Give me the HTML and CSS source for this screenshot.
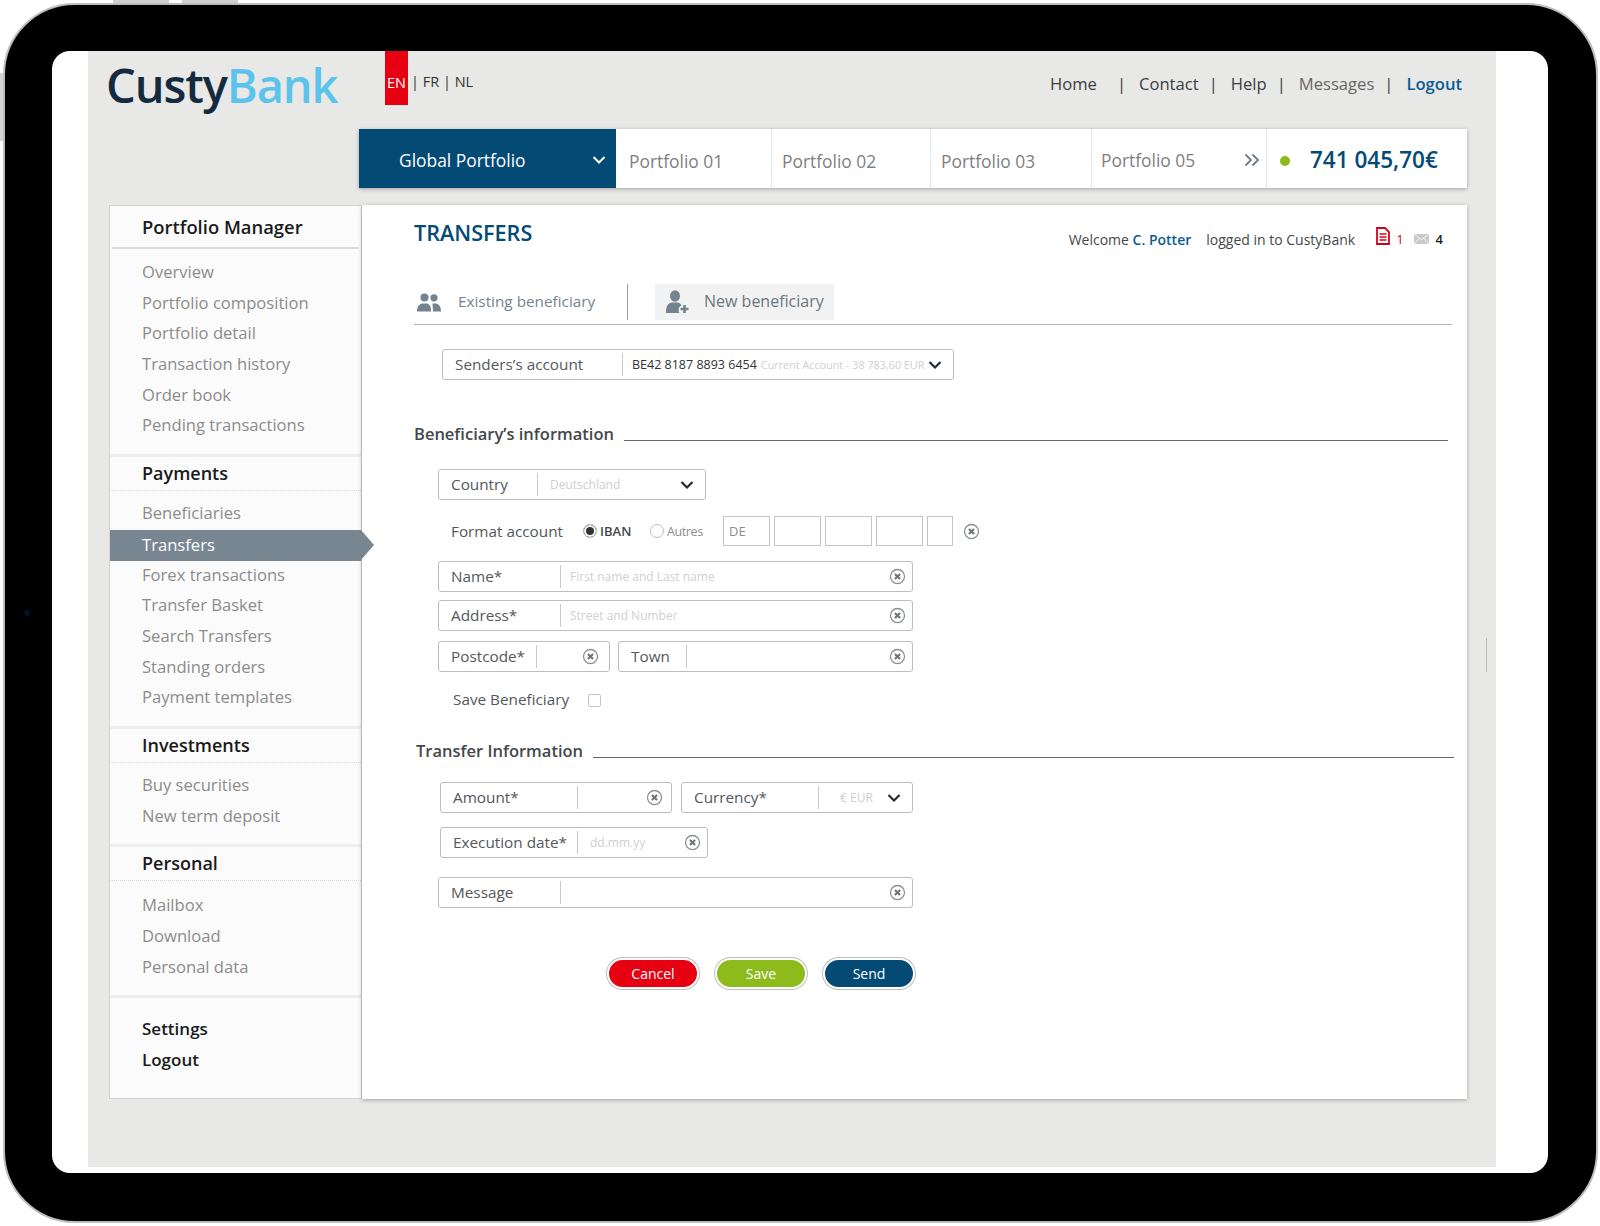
FILE: index.html
```html
<!DOCTYPE html>
<html>
  <head>
    <meta charset="UTF-8">
    <title>CustyBank - Transfers</title>
    <link rel="stylesheet" href="styles.css">
  </head>

  <body>
    <svg class="icon-defs" width="0" height="0">
      <symbol id="clear" viewBox="0 0 16 16">
        <circle cx="8" cy="8" r="6.600" fill="none" stroke="#8a8f93" stroke-width="1.200"/>
        <path d="M5.600 5.600l4.800 4.800M10.400 5.600l-4.800 4.800" fill="none" stroke="#6f7478" stroke-width="2"/>
      </symbol>
      <symbol id="chevron" viewBox="0 0 14 10">
        <path d="M1.500 2l5.500 5.500L12.500 2" fill="none" stroke="#222c33" stroke-width="2.200"/>
      </symbol>
    </svg>

    <div class="tablet">
      <span class="hw-btn hw-btn-one"></span>
      <span class="hw-btn hw-btn-two"></span>
      <span class="hw-side"></span>
      <span class="camera"></span>

      <div class="screen">
        <div class="page">
          <span class="home-line"></span>

          <header class="header">
            <div class="logo"><span class="logo-dark">Custy</span><span class="logo-light">Bank</span></div>
            <div class="lang"><span class="lang-active">EN</span><span class="lang-rest">| FR | NL</span></div>
            <nav class="top-nav">
              <a class="nav-home">Home</a><i>|</i>
              <a>Contact</a><i>|</i>
              <a>Help</a><i>|</i>
              <a class="nav-muted">Messages</a><i>|</i>
              <a class="nav-logout">Logout</a>
            </nav>
          </header>

          <div class="portfolio-bar">
            <div class="tab-global">
              <span>Global Portfolio</span>
              <svg class="tab-chevron" viewBox="0 0 14 10"><path d="M1.500 2l5.500 5.500L12.500 2" fill="none" stroke="#fff" stroke-width="2"/></svg>
            </div>
            <div class="tab tab-one">Portfolio 01</div>
            <div class="tab tab-two">Portfolio 02</div>
            <div class="tab tab-three">Portfolio 03</div>
            <div class="tab tab-five">
              <span>Portfolio 05</span>
              <svg class="tab-more" viewBox="0 0 16 14"><path d="M1.500 1.500L7 7l-5.500 5.500M8.500 1.500L14 7l-5.500 5.500" fill="none" stroke="#6d7c88" stroke-width="1.800"/></svg>
            </div>
            <div class="balance"><span class="balance-dot"></span><span class="balance-value">741 045,70€</span></div>
          </div>

          <div class="content">
            <aside class="sidebar">
              <section class="side-group">
                <h3 class="side-title side-title-first">Portfolio Manager</h3>
                <ul class="side-list side-list-first">
                  <li>Overview</li>
                  <li>Portfolio composition</li>
                  <li>Portfolio detail</li>
                  <li>Transaction history</li>
                  <li>Order book</li>
                  <li>Pending transactions</li>
                </ul>
              </section>
              <section class="side-group">
                <h3 class="side-title">Payments</h3>
                <ul class="side-list">
                  <li>Beneficiaries</li>
                  <li class="active">Transfers</li>
                  <li>Forex transactions</li>
                  <li>Transfer Basket</li>
                  <li>Search Transfers</li>
                  <li>Standing orders</li>
                  <li>Payment templates</li>
                </ul>
              </section>
              <section class="side-group">
                <h3 class="side-title">Investments</h3>
                <ul class="side-list">
                  <li>Buy securities</li>
                  <li>New term deposit</li>
                </ul>
              </section>
              <section class="side-group">
                <h3 class="side-title">Personal</h3>
                <ul class="side-list side-list-personal">
                  <li>Mailbox</li>
                  <li>Download</li>
                  <li>Personal data</li>
                </ul>
              </section>
              <section class="side-bottom">
                <div>Settings</div>
                <div>Logout</div>
              </section>
            </aside>

            <main class="main">
              <div class="title-row">
                <h1>TRANSFERS</h1>
                <div class="welcome">
                  <span>Welcome <b>C. Potter</b></span>
                  <span class="welcome-logged">logged in to CustyBank</span>
                  <svg class="doc-icon" viewBox="0 0 14 18"><path d="M1 1h8l4 4v12H1z" fill="none" stroke="#d0021b" stroke-width="1.800"/><path d="M3.500 7h7M3.500 10h7M3.500 13h7" stroke="#d0021b" stroke-width="1.300"/></svg>
                  <span class="count-red">1</span>
                  <svg class="mail-icon" viewBox="0 0 15 10"><rect width="15" height="10" fill="#c9c9c9"/><path d="M0 0l7.500 5.500L15 0M0 10l5.500-6M15 10L9.500 4" fill="none" stroke="#fff" stroke-width=".8"/></svg>
                  <span class="count-dark">4</span>
                </div>
              </div>

              <div class="bene-tabs">
                <div class="bene-tab bene-existing">
                  <svg class="users-icon" viewBox="0 0 24 19"><circle cx="7.500" cy="4.500" r="4" fill="#74848f"/><path d="M0 18.500c0-5 2-7 5-8h5c3 1 4 3 4 8z" fill="#74848f"/><circle cx="17" cy="4.800" r="3.600" fill="#74848f"/><path d="M15.500 10.500h3.500c3 .8 5 3 5 8h-8c0-3-.5-6-.5-8z" fill="#74848f"/></svg>
                  <span>Existing beneficiary</span>
                </div>
                <div class="bene-tab bene-new">
                  <svg class="user-add-icon" viewBox="0 0 24 24"><ellipse cx="10" cy="6" rx="5" ry="5.800" fill="#74848f"/><path d="M1 23c0-6 1-9 5-10.500h7c2 .6 3 1.500 3.500 3-3 .8-3.500 5-2 7.500z" fill="#74848f"/><path d="M19.500 15v8M15.500 19h8" stroke="#74848f" stroke-width="2.600"/></svg>
                  <span>New beneficiary</span>
                </div>
              </div>

              <div class="field field-sender">
                <span class="field-label label-sender">Senders’s account</span>
                <span class="field-value">
                  <span class="iban-text">BE42 8187 8893 6454</span>
                  <span class="hint hint-small">Current Account - 38 783,60 EUR</span>
                </span>
                <svg class="chevron"><use href="#chevron"/></svg>
              </div>

              <div class="section-head head-bene">
                <h2>Beneficiary’s information</h2><span class="section-line"></span>
              </div>

              <div class="field field-country">
                <span class="field-label label-country">Country</span>
                <span class="field-value value-country"><span class="hint">Deutschland</span></span>
                <svg class="chevron"><use href="#chevron"/></svg>
              </div>

              <div class="format-row">
                <span class="format-label">Format account</span>
                <span class="radio radio-on"></span><span class="radio-text iban-label">IBAN</span>
                <span class="radio radio-off"></span><span class="radio-text autres-label">Autres</span>
                <span class="iban-box box-de">DE</span>
                <span class="iban-box"></span>
                <span class="iban-box"></span>
                <span class="iban-box"></span>
                <span class="iban-box box-last"></span>
                <svg class="clear format-clear"><use href="#clear"/></svg>
              </div>

              <div class="field field-wide field-name">
                <span class="field-label label-wide">Name*</span>
                <span class="field-value"><span class="hint">First name and Last name</span></span>
                <svg class="clear"><use href="#clear"/></svg>
              </div>
              <div class="field field-wide field-address">
                <span class="field-label label-wide">Address*</span>
                <span class="field-value"><span class="hint">Street and Number</span></span>
                <svg class="clear"><use href="#clear"/></svg>
              </div>
              <div class="field-pair pair-town">
                <div class="field field-postcode">
                  <span class="field-label label-postcode">Postcode*</span>
                  <span class="field-value"></span>
                  <svg class="clear clear-postcode"><use href="#clear"/></svg>
                </div>
                <div class="field field-town">
                  <span class="field-label label-town">Town</span>
                  <span class="field-value"></span>
                  <svg class="clear"><use href="#clear"/></svg>
                </div>
              </div>

              <div class="save-row">
                <span>Save Beneficiary</span>
                <span class="checkbox"></span>
              </div>

              <div class="section-head head-transfer">
                <h2>Transfer Information</h2><span class="section-line"></span>
              </div>

              <div class="field-pair pair-amount">
                <div class="field field-amount">
                  <span class="field-label label-amount">Amount*</span>
                  <span class="field-value"></span>
                  <svg class="clear clear-amount"><use href="#clear"/></svg>
                </div>
                <div class="field field-currency">
                  <span class="field-label label-currency">Currency*</span>
                  <span class="field-value value-currency"><span class="hint">€ EUR</span></span>
                  <svg class="chevron"><use href="#chevron"/></svg>
                </div>
              </div>

              <div class="field field-date">
                <span class="field-label label-date">Execution date*</span>
                <span class="field-value value-date"><span class="hint">dd.mm.yy</span></span>
                <svg class="clear"><use href="#clear"/></svg>
              </div>

              <div class="field field-wide field-message">
                <span class="field-label label-wide">Message</span>
                <span class="field-value"></span>
                <svg class="clear"><use href="#clear"/></svg>
              </div>

              <div class="actions">
                <button class="btn btn-cancel">Cancel</button>
                <button class="btn btn-save">Save</button>
                <button class="btn btn-send">Send</button>
              </div>
            </main>
          </div>
        </div>
      </div>
    </div>
  </body>
</html>
```

FILE: styles.css
```css
* {
  box-sizing: border-box;
}

body {
  margin: 0;
  background-color: white;
  font-family: "Open Sans", "Noto Sans", sans-serif;
  color: #3c4043;
}

h1, h2, h3, ul {
  margin: 0;
  padding: 0;
}

ul {
  list-style: none;
}

.icon-defs {
  display: block;
  height: 0;
}

/* device frame */
.tablet {
  position: relative;
  width: 1595px;
  height: 1220px;
  margin: 3px 0 0 3px;
  padding: 46px 0 0 47px;
  background-color: black;
  border: 2px solid #bdbdbd;
  border-radius: 72px;
}

.hw-btn {
  position: absolute;
  top: -5px;
  width: 56px;
  height: 3px;
  background-color: #cfcfcf;
}

.hw-btn-one {
  left: 108px;
}

.hw-btn-two {
  left: 177px;
}

.hw-side {
  position: absolute;
  left: -5px;
  top: 68px;
  width: 3px;
  height: 68px;
  background-color: #d4d4d4;
}

.camera {
  position: absolute;
  left: 19px;
  top: 605px;
  width: 6px;
  height: 6px;
  border-radius: 50%;
  background-color: #06122a;
}

.screen {
  width: 1496px;
  height: 1122px;
  background-color: white;
  border-radius: 18px;
  overflow: hidden;
}

.page {
  position: relative;
  width: 1408px;
  height: 1116px;
  margin-left: 36px;
  background-color: #e8e8e6;
}

.home-line {
  position: absolute;
  right: 9px;
  top: 587px;
  width: 1px;
  height: 34px;
  background-color: #bcbcbc;
}

/* header */
.header {
  display: flex;
  height: 78px;
  padding-left: 18px;
}

.logo {
  width: 279px;
  font-size: 47px;
  font-weight: 600;
  line-height: 68px;
  letter-spacing: -1.100px;
}

.logo-dark {
  color: #15293f;
}

.logo-light {
  color: #5cc3ec;
}

.lang {
  display: flex;
  height: 54px;
  font-size: 14.500px;
  color: #333;
}

.lang-active {
  width: 23px;
  background-color: #e60012;
  color: white;
  text-align: center;
  line-height: 63px;
}

.lang-rest {
  padding-left: 3px;
  line-height: 62px;
}

.top-nav {
  display: flex;
  margin-left: auto;
  margin-right: 34px;
  padding-top: 21px;
  font-size: 16.600px;
  line-height: 24px;
  color: #3a3d40;
}

.top-nav i {
  margin: 0 13px 0 10px;
  font-style: normal;
}

.top-nav .nav-home + i {
  margin-left: 20px;
}

.nav-muted {
  color: #666;
}

.nav-logout {
  color: #0a5c94;
  font-weight: 600;
}

/* portfolio bar */
.portfolio-bar {
  display: flex;
  width: 1108px;
  height: 59px;
  margin-left: 271px;
  background-color: white;
  box-shadow: 0 1px 4px rgba(0, 0, 0, 0.3);
  font-size: 17.400px;
  line-height: 59px;
}

.tab-global {
  display: flex;
  align-items: center;
  justify-content: space-between;
  width: 257px;
  padding: 3px 10px 0 40px;
  background-color: #034a75;
  color: white;
}

.tab-chevron {
  width: 14px;
  height: 10px;
}

.tab {
  padding-top: 3px;
  padding-left: 13px;
  border-right: 1px solid #e6e6e6;
  color: #7f7f7f;
}

.tab-one {
  width: 156px;
}

.tab-two {
  width: 159px;
  padding-left: 10px;
}

.tab-three {
  width: 161px;
  padding-left: 10px;
}

.tab-five {
  display: flex;
  align-items: center;
  justify-content: space-between;
  width: 175px;
  padding: 3px 6px 0 9px;
}

.tab-more {
  width: 16px;
  height: 14px;
}

.balance {
  display: flex;
  align-items: center;
  flex: 1;
  padding: 2px 0 0 13px;
}

.balance-dot {
  width: 10px;
  height: 10px;
  margin-top: 2px;
  border-radius: 50%;
  background-color: #8cbb1b;
}

.balance-value {
  margin-left: 20px;
  font-size: 22.500px;
  font-weight: 600;
  color: #034a75;
}

/* sidebar */
.content {
  display: flex;
  height: 894px;
  margin: 17px 0 0 21px;
}

.sidebar {
  display: flex;
  flex-direction: column;
  width: 253px;
  background-color: #fbfbfb;
  border: 1px solid #d2d2d2;
}

.side-group {
  padding-bottom: 13px;
  border-bottom: 3px solid #eeeeee;
}

.side-title {
  height: 34px;
  padding-left: 32px;
  border-bottom: 1px dotted #dcdcdc;
  font-size: 18px;
  font-weight: 600;
  line-height: 32px;
  color: #1a1a1a;
}

.side-title-first {
  height: 43px;
  margin: 0 2px;
  padding-left: 30px;
  border-bottom: 2px solid #dcdcdc;
  font-size: 18.400px;
  line-height: 41px;
}

.side-list {
  padding-top: 7px;
}

.side-list-first {
  padding-top: 8px;
}

.side-list-first li {
  height: 31px;
}

.side-list-personal {
  padding-top: 9px;
}

.side-list li {
  position: relative;
  padding-left: 32px;
  font-size: 16.600px;
  line-height: 30px;
  color: #8c8c8c;
  height: 30.700px;
}

.side-list .active {
  margin-top: 1px;
  margin-bottom: -1px;
  background-color: #788691;
  color: white;
}

.side-list .active::after {
  content: "";
  position: absolute;
  left: 100%;
  top: 0;
  border-top: 15px solid transparent;
  border-bottom: 15px solid transparent;
  border-left: 13px solid #788691;
}

.side-bottom {
  padding: 15px 0 0 32px;
  font-size: 17px;
  font-weight: 600;
  line-height: 31px;
  color: #1a1a1a;
}

/* main panel */
.main {
  width: 1105px;
  padding-left: 52px;
  background-color: white;
  box-shadow: 0 1px 4px rgba(0, 0, 0, 0.3);
}

.title-row {
  display: flex;
  justify-content: space-between;
  width: 1029px;
  height: 79px;
  padding-top: 12px;
}

.title-row h1 {
  font-size: 21.600px;
  font-weight: 600;
  line-height: 32px;
  color: #034a75;
}

.welcome {
  display: flex;
  align-items: center;
  height: 44px;
  font-size: 14px;
  color: #44484b;
}

.welcome b {
  font-weight: 600;
  color: #0a5c94;
}

.welcome-logged {
  margin-left: 15px;
}

.doc-icon {
  width: 14px;
  height: 18px;
  margin: -6px 0 0 21px;
}

.count-red {
  margin-left: 6px;
  font-size: 13px;
  color: #d0021b;
}

.mail-icon {
  width: 15px;
  height: 10px;
  margin-left: 10px;
}

.count-dark {
  margin-left: 7px;
  font-size: 13px;
  font-weight: 600;
  color: #222;
}

.bene-tabs {
  display: flex;
  width: 1038px;
  height: 41px;
  border-bottom: 1px solid #b2b2b2;
  font-size: 16px;
}

.bene-tab {
  display: flex;
  align-items: center;
  height: 36px;
  color: #74848f;
}

.bene-tab span {
  margin-bottom: 3px;
}

.bene-existing {
  width: 214px;
  padding-left: 3px;
  border-right: 1px solid #9a9a9a;
  font-size: 15.300px;
}

.bene-existing span {
  margin-left: 17px;
}

.users-icon {
  width: 24px;
  height: 19px;
}

.bene-new {
  width: 179px;
  margin-left: 27px;
  padding-left: 10px;
  background-color: #f2f2f2;
  color: #687782;
}

.bene-new span {
  margin-left: 15px;
}

.user-add-icon {
  width: 24px;
  height: 24px;
}

/* form fields */
.field {
  display: flex;
  align-items: center;
  height: 31px;
  border: 1px solid #bdbdbd;
  border-radius: 3px;
  font-size: 15.300px;
  color: #54585b;
}

.field-label {
  flex: none;
  padding-left: 12px;
  padding-bottom: 2px;
  white-space: nowrap;
}

.field-value {
  display: flex;
  align-items: center;
  flex: 1;
  height: 23px;
  padding-left: 9px;
  border-left: 1px solid #c8c8c8;
  white-space: nowrap;
  overflow: hidden;
}

.hint {
  font-size: 12px;
  color: #cfcfcf;
}

.clear {
  flex: none;
  width: 17px;
  height: 17px;
  margin-right: 6px;
}

.clear-postcode {
  margin-right: 10px;
}

.clear-amount {
  margin-right: 8px;
}

.chevron {
  flex: none;
  width: 14px;
  height: 10px;
  margin-right: 11px;
}

.field-sender {
  width: 512px;
  margin: 24px 0 0 28px;
}

.label-sender {
  width: 179px;
}

.iban-text {
  font-size: 12.500px;
  color: #333;
}

.hint-small {
  margin-left: 4px;
  font-size: 10.800px;
}

.section-head {
  display: flex;
  height: 24px;
}

.section-head h2 {
  font-size: 16.500px;
  font-weight: 600;
  line-height: 24px;
  color: #44484b;
  white-space: nowrap;
}

.section-line {
  flex: 1;
  height: 1px;
  margin: 18px 0 0 10px;
  background-color: #666;
}

.head-bene {
  width: 1034px;
  margin-top: 42px;
}

.field-country {
  width: 268px;
  margin: 23px 0 0 24px;
}

.label-country {
  width: 98px;
}

.value-country {
  padding-left: 12px;
}

.format-row {
  display: flex;
  align-items: center;
  height: 30px;
  margin: 16px 0 0 37px;
  font-size: 15.300px;
  color: #54585b;
}

.format-label {
  width: 132px;
}

.radio {
  width: 14px;
  height: 14px;
  border: 1px solid #bdbdbd;
  border-radius: 50%;
}

.radio-on {
  background-color: #333;
  box-shadow: inset 0 0 0 2px white;
}

.radio-text {
  font-size: 13px;
}

.iban-label {
  width: 53px;
  padding-left: 3px;
  font-weight: 600;
  color: #44484b;
}

.autres-label {
  width: 59px;
  padding-left: 3px;
  font-size: 12.500px;
  color: #8c8c8c;
  letter-spacing: -0.4px;
}

.iban-box {
  width: 47px;
  height: 30px;
  margin-right: 4px;
  padding-left: 5px;
  border: 1px solid #c4c4c4;
  font-size: 13px;
  line-height: 28px;
  color: #8c8c8c;
}

.box-last {
  width: 26px;
}

.format-clear {
  margin-left: 6px;
}

.field-wide {
  width: 475px;
  margin-left: 24px;
}

.label-wide {
  width: 121px;
}

.field-name {
  margin-top: 15px;
}

.field-address {
  margin-top: 8px;
}

.field-pair {
  display: flex;
  gap: 8px;
}

.pair-town {
  width: 475px;
  margin: 10px 0 0 24px;
}

.field-postcode {
  width: 172px;
}

.label-postcode {
  width: 97px;
}

.field-town {
  flex: 1;
}

.label-town {
  width: 67px;
}

.save-row {
  display: flex;
  align-items: center;
  height: 24px;
  margin: 15px 0 0 39px;
  font-size: 15.300px;
  color: #54585b;
}

.checkbox {
  width: 13px;
  height: 13px;
  margin: 2px 0 0 19px;
  border: 1px solid #c4c4c4;
  border-radius: 2px;
}

.head-transfer {
  width: 1038px;
  margin: 28px 0 0 2px;
}

.pair-amount {
  width: 473px;
  margin: 19px 0 0 26px;
  gap: 9px;
}

.field-amount {
  width: 232px;
}

.label-amount {
  width: 136px;
}

.field-currency {
  flex: 1;
}

.label-currency {
  width: 136px;
}

.value-currency {
  padding-left: 21px;
}

.field-date {
  width: 268px;
  margin: 14px 0 0 26px;
}

.label-date {
  width: 136px;
}

.value-date {
  padding-left: 12px;
}

.field-message {
  margin-top: 19px;
}

/* buttons */
.actions {
  display: flex;
  gap: 16px;
  margin: 50px 0 0 193px;
}

.btn {
  width: 92px;
  height: 31px;
  padding: 0;
  border: 2px solid white;
  border-radius: 16px;
  box-shadow: 0 0 0 1px #bdbdbd;
  font-family: inherit;
  font-size: 14px;
  color: white;
}

.btn-cancel {
  background-color: #e60012;
}

.btn-save {
  background-color: #8cbb1b;
}

.btn-send {
  background-color: #034a75;
}
```
